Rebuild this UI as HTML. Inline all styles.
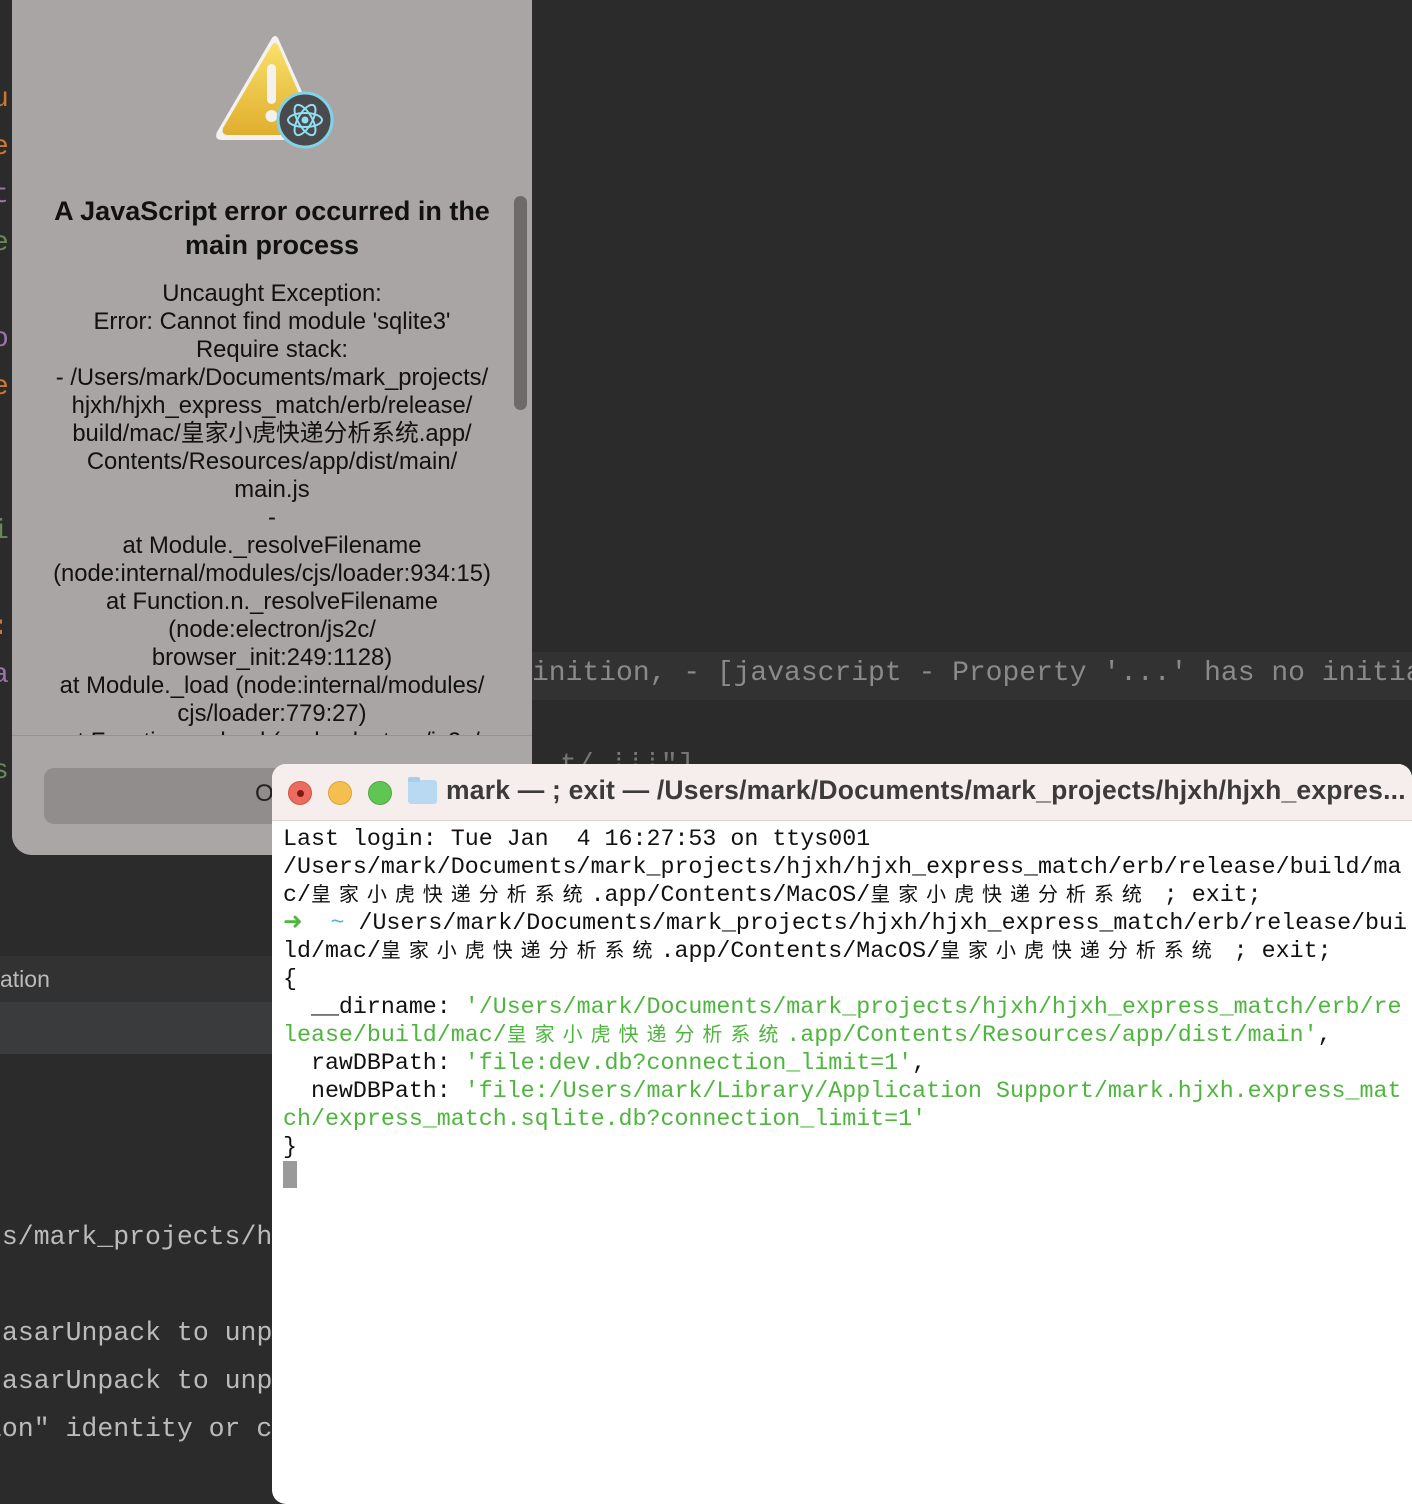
<!DOCTYPE html>
<html><head><meta charset="utf-8"><style>
*{margin:0;padding:0;box-sizing:border-box}
body{width:1412px;height:1504px;background:#2b2b2b;position:relative;overflow:hidden;font-family:"Liberation Sans","Noto Sans CJK SC",sans-serif}
.ed{position:absolute;font-family:"Liberation Mono",monospace;white-space:pre}
.dlg{position:absolute;left:12px;top:0;width:520px;height:855px;background:#a9a5a4;border-radius:0 0 20px 20px;overflow:hidden}
.dtext{position:absolute;left:0;width:520px;text-align:center;color:#111;font-size:23.8px;line-height:28px;white-space:nowrap}
.term{position:absolute;left:272px;top:764px;width:1140px;height:740px;background:#fff;border-radius:14px 14px 0 14px;overflow:hidden}
.tb{height:57px;background:#f6eeec;border-bottom:1px solid #d8d2d0;position:relative}
.dot{position:absolute;top:17px;width:24px;height:24px;border-radius:50%}
.tt{font-family:"Liberation Mono",monospace;font-size:23.3px;line-height:28px;white-space:pre;color:#111;position:absolute;left:11px;top:61px}
.c{font-family:"Noto Sans CJK SC",sans-serif;font-size:20px;letter-spacing:7.96px;line-height:1}
.g{color:#4fb53f}
</style></head><body>
<div style="position:absolute;left:532px;top:652px;width:880px;height:48px;background:#323232"></div>
<div class="ed" style="left:532px;top:658px;font-size:28px;color:#8a8a8a">inition, - [javascript - Property '...' has no initia</div>
<div class="ed" style="left:560px;top:750px;font-size:28px;color:#777">t/ ⁞⁞⁞"]</div>
<div style="position:absolute;left:0;top:956px;width:272px;height:46px;background:#323232"></div>
<div style="position:absolute;left:0;top:1002px;width:272px;height:52px;background:#3a3b3d"></div>
<div style="position:absolute;left:0;top:966px;font-size:23px;color:#bbb">ation</div>
<div class="ed" style="left:-14px;top:1222px;font-size:26.5px;color:#bbb">ts/mark_projects/h</div>
<div class="ed" style="left:2px;top:1318px;font-size:26.5px;color:#bbb">asarUnpack to unp</div>
<div class="ed" style="left:2px;top:1366px;font-size:26.5px;color:#bbb">asarUnpack to unp</div>
<div class="ed" style="left:-14px;top:1414px;font-size:26.5px;color:#bbb">ion" identity or c</div>
<div class="ed" style="left:-8px;top:84px;font-size:28px;color:#cc7832">u</div>
<div class="ed" style="left:-8px;top:132px;font-size:28px;color:#cc7832">e</div>
<div class="ed" style="left:-8px;top:180px;font-size:28px;color:#9876aa">t</div>
<div class="ed" style="left:-8px;top:228px;font-size:28px;color:#6a8759">e</div>
<div class="ed" style="left:-8px;top:324px;font-size:28px;color:#9876aa">o</div>
<div class="ed" style="left:-8px;top:372px;font-size:28px;color:#cc7832">e</div>
<div class="ed" style="left:-8px;top:516px;font-size:28px;color:#6a8759">i</div>
<div class="ed" style="left:-8px;top:612px;font-size:28px;color:#cc7832">:</div>
<div class="ed" style="left:-8px;top:660px;font-size:28px;color:#9876aa">a</div>
<div class="ed" style="left:-8px;top:756px;font-size:28px;color:#6a8759">s</div>

<div class="dlg">
  <svg style="position:absolute;left:200px;top:34px" width="125" height="116" viewBox="0 0 125 116">
    <defs><linearGradient id="y" x1="0" y1="0" x2="0" y2="1"><stop offset="0" stop-color="#f9e06a"/><stop offset="1" stop-color="#e0ae2e"/></linearGradient></defs>
    <path d="M60 4 Q63 0 66 4 L108 98 Q110 106 102 106 L10 106 Q2 106 5 98 Z" fill="#f4f1ee"/>
    <path d="M60 11 Q63 7 66 11 L102 94 Q104 101 97 101 L16 101 Q9 101 11 94 Z" fill="url(#y)"/>
    <rect x="55" y="30" width="9" height="40" rx="4.5" fill="#f4f1ee"/>
    <circle cx="59.5" cy="82" r="6" fill="#f4f1ee"/>
    <circle cx="93" cy="86" r="27" fill="#4a4a4c" stroke="#7fd4e8" stroke-width="3"/>
    <g fill="none" stroke="#8fdff0" stroke-width="2"><ellipse cx="93" cy="86" rx="17" ry="7"/><ellipse cx="93" cy="86" rx="17" ry="7" transform="rotate(60 93 86)"/><ellipse cx="93" cy="86" rx="17" ry="7" transform="rotate(-60 93 86)"/></g>
    <circle cx="93" cy="86" r="3.5" fill="#8fdff0"/>
  </svg>
  <div class="dtext" style="top:194px;font-size:27px;line-height:34px;font-weight:bold">A JavaScript error occurred in the<br>main process</div>
  <div class="dtext" style="top:280px">Uncaught Exception:<br>Error: Cannot find module 'sqlite3'<br>Require stack:<br>- /Users/mark/Documents/mark_projects/<br>hjxh/hjxh_express_match/erb/release/<br>build/mac/皇家小虎快递分析系统.app/<br>Contents/Resources/app/dist/main/<br>main.js<br>-<br>at Module._resolveFilename<br>(node:internal/modules/cjs/loader:934:15)<br>at Function.n._resolveFilename<br>(node:electron/js2c/<br>browser_init:249:1128)<br>at Module._load (node:internal/modules/<br>cjs/loader:779:27)<br>at Function.c._load (node:electron/js2c/</div>
  <div style="position:absolute;left:0;top:735px;width:520px;height:120px;background:#aaa6a5;border-top:1px solid #979392"></div>
  <div style="position:absolute;left:502px;top:196px;width:13px;height:214px;border-radius:7px;background:#6d6a69"></div>
  <div style="position:absolute;left:32px;top:768px;width:480px;height:56px;border-radius:10px;background:#918d8d"></div>
  <div style="position:absolute;left:243px;top:780px;font-size:24px;color:#222">O</div>
</div>

<div class="term">
  <div class="tb">
    <div class="dot" style="left:16px;background:#ed6a5e;border:1px solid #d05548"><div style="position:absolute;left:8px;top:8px;width:7px;height:7px;border-radius:50%;background:#7e1a12"></div></div>
    <div class="dot" style="left:56px;background:#f5bf4f;border:1px solid #dca53a"></div>
    <div class="dot" style="left:96px;background:#61c554;border:1px solid #4ea940"></div>
    <div style="position:absolute;left:136px;top:16px;width:29px;height:24px;background:#b9d8f2;border-radius:3px"><div style="position:absolute;left:0;top:-3px;width:12px;height:5px;background:#a9cdee;border-radius:2px 2px 0 0"></div></div>
    <div style="position:absolute;left:174px;top:11px;font-size:26.5px;font-weight:bold;color:#3d3a3a;white-space:nowrap;letter-spacing:0.2px">mark — ; exit — /Users/mark/Documents/mark_projects/hjxh/hjxh_expres...</div>
  </div>
  <div class="tt">Last login: Tue Jan  4 16:27:53 on ttys001
/Users/mark/Documents/mark_projects/hjxh/hjxh_express_match/erb/release/build/ma
c/<span class="c">皇家小虎快递分析系统</span>.app/Contents/MacOS/<span class="c">皇家小虎快递分析系统</span> ; exit;
<span class="g">➜</span>  <span style="color:#47b6d0">~</span> /Users/mark/Documents/mark_projects/hjxh/hjxh_express_match/erb/release/bui
ld/mac/<span class="c">皇家小虎快递分析系统</span>.app/Contents/MacOS/<span class="c">皇家小虎快递分析系统</span> ; exit;
{
  __dirname: <span class="g">'/Users/mark/Documents/mark_projects/hjxh/hjxh_express_match/erb/re
lease/build/mac/<span class="c">皇家小虎快递分析系统</span>.app/Contents/Resources/app/dist/main'</span>,
  rawDBPath: <span class="g">'file:dev.db?connection_limit=1'</span>,
  newDBPath: <span class="g">'file:/Users/mark/Library/Application Support/mark.hjxh.express_mat
ch/express_match.sqlite.db?connection_limit=1'</span>
}
<span style="display:inline-block;width:14px;height:27px;background:#9a9a9a;vertical-align:top"></span></div>
</div>
</body></html>
